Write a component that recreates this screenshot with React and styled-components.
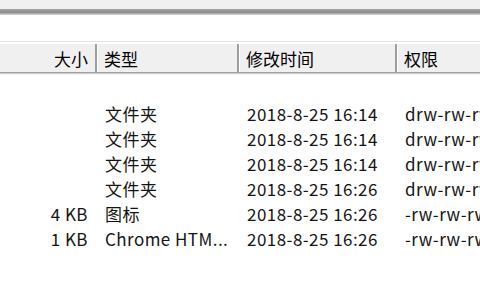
import { createGlobalStyle, styled } from 'styled-components'

const GlobalStyle = createGlobalStyle`
  html, body {
    margin: 0;
    padding: 0;
    background: #ffffff;
  }
  body {
    width: 480px;
    height: 300px;
    overflow: hidden;
    font-family: "Noto Sans CJK SC", "Noto Sans", sans-serif;
  }
`

const Window = styled.div`
  width: 480px;
  height: 300px;
  display: flex;
  flex-direction: column;
  background: #ffffff;`

const TopStrip = styled.div`
  height: 9px;
  background: #f0f0f0;
  flex-shrink: 0;`

const Frame = styled.div`
  height: 6px;
  flex-shrink: 0;
  background: linear-gradient(
    to bottom,
    #b4b4b4 0px,
    #8c8c8c 1px,
    #a8a8a8 2px,
    #7c7c7c 3px,
    #9a9a9a 4px,
    #c8c8c8 5px
  );`

const Blank = styled.div`
  height: 26px;
  flex-shrink: 0;
  background: #ffffff;
  border-bottom: 1px solid #e3e3e3;`

const Header = styled.div`
  display: grid;
  grid-template-columns: 95px 142px 158px 1fr;
  height: 28px;
  margin-top: 2px;
  background: #f0f0f0;
  border-bottom: 1px solid #a0a0a0;
  box-shadow: 0 1px 0 #d0d0d0, 0 2px 0 #f4f4f4;
  flex-shrink: 0;`

const HeadCell = styled.div`
  display: flex;
  align-items: center;
  justify-content: ${(p) => (p.$right ? 'flex-end' : 'flex-start')};
  padding: ${(p) => (p.$right ? '0 7px 0 0' : '0 0 0 7px')};
  font-size: 17px;
  color: #000000;
  border-left: ${(p) => (p.$first ? 'none' : '2px solid #9e9e9e')};
  box-shadow: ${(p) => (p.$first ? 'none' : 'inset 1px 0 0 #ffffff')};
  white-space: nowrap;
  overflow: hidden;`

const Body = styled.div`
  padding-top: 28px;
  display: flex;
  flex-direction: column;`

const Row = styled.div`
  display: grid;
  grid-template-columns: 95px 142px 158px 1fr;
  height: 25px;
  align-items: center;`

const Cell = styled.div`
  font-size: 17px;
  letter-spacing: 0.45px;
  color: #141414;
  white-space: nowrap;
  overflow: hidden;
  text-align: ${(p) => (p.$right ? 'right' : 'left')};
  padding: ${(p) => (p.$right ? '0 7px 0 0' : '0 0 0 10px')};`

const files = [
  { size: '', type: '文件夹', time: '2018-8-25 16:14', perm: 'drw-rw-rw-' },
  { size: '', type: '文件夹', time: '2018-8-25 16:14', perm: 'drw-rw-rw-' },
  { size: '', type: '文件夹', time: '2018-8-25 16:14', perm: 'drw-rw-rw-' },
  { size: '', type: '文件夹', time: '2018-8-25 16:26', perm: 'drw-rw-rw-' },
  { size: '4 KB', type: '图标', time: '2018-8-25 16:26', perm: '-rw-rw-rw-' },
  { size: '1 KB', type: 'Chrome HTM...', time: '2018-8-25 16:26', perm: '-rw-rw-rw-' },
]

const App = () => {
  return (
    <Window>
      <GlobalStyle />
      <TopStrip />
      <Frame />
      <Blank />
      <Header>
        <HeadCell $first $right>大小</HeadCell>
        <HeadCell>类型</HeadCell>
        <HeadCell>修改时间</HeadCell>
        <HeadCell>权限</HeadCell>
      </Header>
      <Body>
        {files.map((f, i) => (
          <Row key={i}>
            <Cell $right>{f.size}</Cell>
            <Cell>{f.type}</Cell>
            <Cell>{f.time}</Cell>
            <Cell>{f.perm}</Cell>
          </Row>
        ))}
      </Body>
    </Window>
  )
}

export default App
